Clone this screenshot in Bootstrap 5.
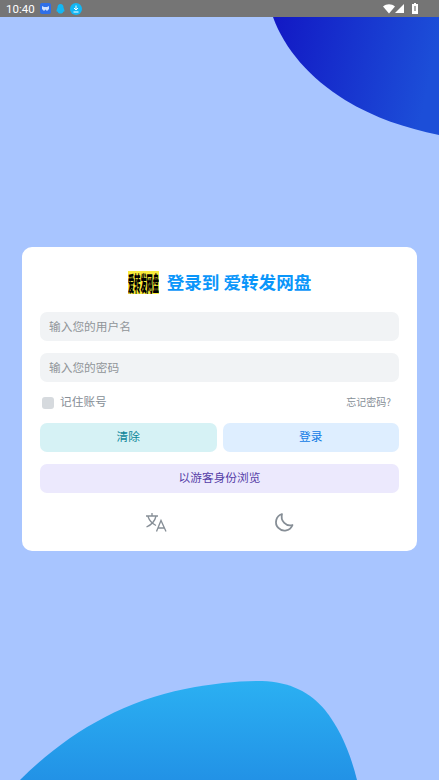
<!DOCTYPE html>
<html lang="zh">
<head>
    <meta charset="UTF-8">
    <meta name="viewport" content="width=device-width, initial-scale=1.0">
    <title>登录 - 爱转发网盘</title>
    <link href="https://cdn.jsdelivr.net/npm/bootstrap@5.3.0/dist/css/bootstrap.min.css" rel="stylesheet">
    <style>
        html, body { height: 100%; }
        body {
            background: #a8c5ff;
            font-family: "Noto Sans CJK SC", "Liberation Sans", sans-serif;
            overflow: hidden;
        }
        .screen { height: 780px; position: relative; }
        .blob { position: absolute; left: 0; top: 0; }
        .status-bar { height: 17px; background: #757575; color: #fff; position: relative; z-index: 2; font: 11.500px Roboto, sans-serif; padding: 0 21px 0 6px; }
        .status-time { margin-right: 5px; }
        .login-wrap { position: relative; z-index: 1; height: 763px; padding: 230px 22px 0; }
        .login-card { height: 304px; border-radius: 10px; padding: 17px 18px 0; border: 0; gap: 12px; }
        .login-head { height: 36px; gap: 8px; }
        .logo-box { width: 31px; height: 23px; background: #f9ec3c; }
        .logo-text { display: block; width: 100px; font-size: 20px; line-height: 23px; font-weight: 900; color: #000; white-space: nowrap; transform: scaleX(.31) scaleY(1.05); transform-origin: left center; }
        .login-title { font-size: 17.600px; font-weight: 700; color: #0a96fa; margin: 0; line-height: 34px; }
        .field { height: 29px; border: 0; border-radius: 7px; background: #f1f3f5; font-size: 11.700px; padding: 0 9px 3px; color: #495057; }
        .field::placeholder { color: #909599; opacity: 1; }
        .field:focus { background: #f1f3f5; box-shadow: none; }
        .option-row { height: 17px; padding: 0 8px 0 2px; }
        .check-box { width: 12px; height: 12px; border-radius: 3px; background: #d6dade; margin-right: 6px; }
        .remember { font-size: 11.700px; color: #868e96; margin-bottom: 3px; }
        .forgot { font-size: 10px; color: #868e96; text-decoration: none; margin-bottom: 3px; }
        .act-row { gap: 6px; }
        .act-btn { height: 29px; border: 0; border-radius: 7px; font-size: 11.700px; padding: 0 0 3px; line-height: 26px; }
        .btn-clear { background: #d6f2f5; color: #0c8599; }
        .btn-login { background: #deeeff; color: #0f7ae5; }
        .btn-guest { background: #ece9fd; color: #5640a8; }
        .tool-row { height: 34px; gap: 104px; }
    </style>
</head>
<body>
<div class="screen">
    <svg class="blob" width="439" height="780" viewBox="0 0 439 780">
        <defs>
            <linearGradient id="topGrad" x1="0" y1="0" x2="1" y2="0.15">
                <stop offset="0" stop-color="#1218c4"/>
                <stop offset="1" stop-color="#1c4ed8"/>
            </linearGradient>
            <linearGradient id="bottomGrad" x1="0" y1="0" x2="0" y2="1">
                <stop offset="0" stop-color="#2bb0f2"/>
                <stop offset="1" stop-color="#2292e6"/>
            </linearGradient>
        </defs>
        <path d="M273 17C285 50 310 78 345 100C375 118 405 128 439 135V17Z" fill="url(#topGrad)"/>
        <path d="M20 780C65 735 120 702 185 689C215 683 240 681 262 681C290 682 310 692 325 710C340 729 350 752 357 780Z" fill="url(#bottomGrad)"/>
    </svg>

    <div class="status-bar d-flex align-items-center">
        <span class="status-time">10:40</span>
        <svg width="11" height="11" viewBox="0 0 11 11"><rect width="11" height="11" rx="2" fill="#2f6fe8"/><path d="M2 3l2 1h3l2-1v3l-2 2-1.500-1.500L4 8 2 6z" fill="#cfe0ff"/></svg>
        <svg class="ms-1" width="11" height="12" viewBox="0 0 11 12"><path d="M5.500 1C7.500 1 8.500 2.500 8.500 4.500L9.500 7.500C9.500 9 8.500 9 8 8.500C8.500 10 7 10.500 5.500 10.500S2.500 10 3 8.500C2.500 9 1.500 9 1.500 7.500L2.500 4.500C2.500 2.500 3.500 1 5.500 1Z" fill="#12b7f5"/></svg>
        <svg class="ms-1" width="12" height="12" viewBox="0 0 12 12"><circle cx="6" cy="6" r="6" fill="#12b7f5"/><path d="M6 2.500V6.500M4 5l2 2 2-2M3.500 9h5" stroke="#fff" fill="none"/></svg>
        <svg class="ms-auto" width="12" height="10" viewBox="0 0 12 10"><path d="M0 2.500C3.500-.5 8.500-.5 12 2.500L6 9.500Z" fill="#fff"/></svg>
        <svg width="9" height="9" viewBox="0 0 9 9"><path d="M9 0V9H0Z" fill="#fff"/></svg>
        <svg class="ms-2" width="6" height="11" viewBox="0 0 6 11"><path d="M2 0H4V1H6V11H0V1H2Z" fill="#fff"/><path d="M3 3V8" stroke="#757575" stroke-width="1.200"/></svg>
    </div>

    <div class="login-wrap">
        <div class="card login-card d-flex flex-column">
            <div class="d-flex justify-content-center align-items-center login-head">
                <span class="logo-box"><span class="logo-text">爱转发网盘</span></span>
                <h1 class="login-title">登录到 爱转发网盘</h1>
            </div>
            <input class="form-control field" type="text" placeholder="输入您的用户名">
            <input class="form-control field" type="password" placeholder="输入您的密码">
            <div class="d-flex justify-content-between align-items-center option-row">
                <div class="d-flex align-items-center">
                    <span class="check-box"></span>
                    <span class="remember">记住账号</span>
                </div>
                <a class="forgot" href="#">忘记密码?</a>
            </div>
            <div class="d-flex act-row">
                <button class="btn act-btn btn-clear w-50" type="button">清除</button>
                <button class="btn act-btn btn-login w-50" type="button">登录</button>
            </div>
            <button class="btn act-btn btn-guest w-100" type="button">以游客身份浏览</button>
            <div class="d-flex justify-content-center align-items-center tool-row">
                <svg width="24" height="24" viewBox="0 0 24 24" fill="none" stroke="#868e96" stroke-width="1.300"><path d="M2 6H14M8 3V6M12 6C11 11 7 15 2.500 17M4 6.500C5.500 11 9 14 12 15.500"/><path d="M12.500 21.500L17 10.500L22 21.500M14 18H20.500"/></svg>
                <svg width="24" height="24" viewBox="0 0 24 24" fill="none" stroke="#868e96" stroke-width="1.800"><path d="M10 4A8.500 8.500 0 1 0 20.500 15C14.500 17 8 11 10 4Z" stroke-linejoin="round"/></svg>
            </div>
        </div>
    </div>
</div>
<script src="https://cdn.jsdelivr.net/npm/bootstrap@5.3.0/dist/js/bootstrap.bundle.min.js"></script>
</body>
</html>
